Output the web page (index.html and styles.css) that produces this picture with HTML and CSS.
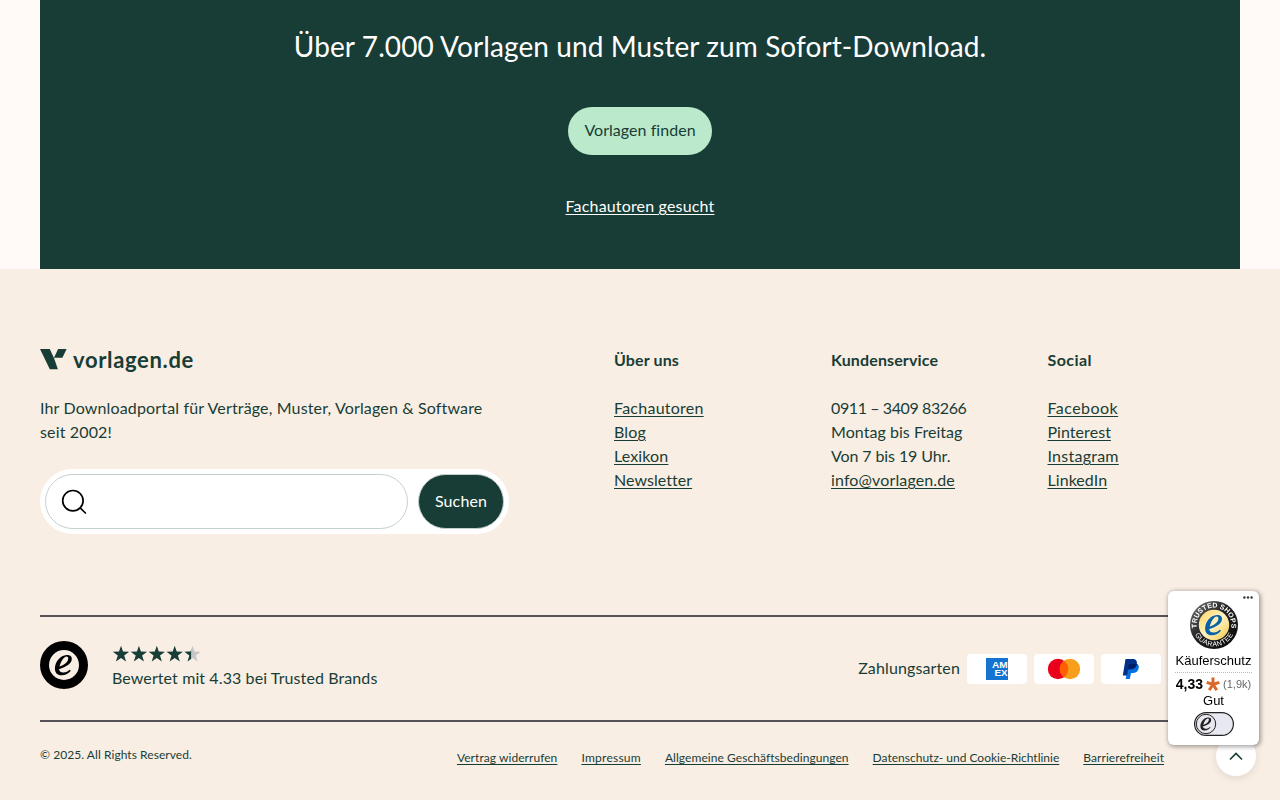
FILE: index.html
```
<!DOCTYPE html>
<html lang="de">
<head>
    <meta charset="UTF-8">
    <title>vorlagen.de</title>
    <link rel="stylesheet" href="styles.css">
</head>
<body>
    <section class="cta">
        <h2><span>Über 7.000 Vorlagen und Muster zum Sofort-Download.</span></h2>
        <a class="cta-btn" href="#">Vorlagen finden</a>
        <a class="cta-link" href="#">Fachautoren gesucht</a>
    </section>

    <footer class="footer">
        <div class="footer-top">
            <div class="about">
                <a class="logo" href="#">
                    <svg width="27" height="21" viewBox="0 0 27 21" fill="#183d36">
                        <path d="M0 0h9.8l4.3 9.3 3.8 10.9H9.8Z"/>
                        <path d="M18.1 0h8.5l-4.2 8.8H14Z"/>
                    </svg>
                    <span>vorlagen.de</span>
                </a>
                <p class="claim">Ihr Downloadportal für Verträge, Muster, Vorlagen &amp; Software<br>seit 2002!</p>
                <form class="search">
                    <div class="search-field">
                        <svg width="26" height="26" viewBox="0 0 26 26" fill="none" stroke="#000" stroke-width="1.7" stroke-linecap="round">
                            <circle cx="11.9" cy="11.7" r="10.2"/>
                            <path d="M19.4 19.2l5 4.8"/>
                        </svg>
                    </div>
                    <button class="search-btn" type="button">Suchen</button>
                </form>
            </div>
            <div class="col">
                <h3>Über uns</h3>
                <a class="wide" href="#">Fachautoren</a>
                <a href="#">Blog</a>
                <a href="#">Lexikon</a>
                <a class="tight" href="#">Newsletter</a>
            </div>
            <div class="col">
                <h3>Kundenservice</h3>
                <span class="phone">0911 – 3409 83266</span>
                <span class="tight">Montag bis Freitag</span>
                <span class="hours">Von 7 bis 19 Uhr.</span>
                <a href="#">info@vorlagen.de</a>
            </div>
            <div class="col">
                <h3 class="wider">Social</h3>
                <a class="wider" href="#">Facebook</a>
                <a class="tight" href="#">Pinterest</a>
                <a class="wide" href="#">Instagram</a>
                <a class="tight" href="#">LinkedIn</a>
            </div>
        </div>

        <div class="trust">
            <svg class="trust-logo" width="48" height="48" viewBox="0 0 48 48">
                <circle cx="24" cy="24" r="24"/>
                <circle cx="24" cy="24" r="15" fill="#f9eee4"/>
                <path transform="translate(14 13.5)" d="M3.7 14.8C8 13.7 17.7 10.6 17.8 4.4 17.9 1.4 15.6.4 12.7.5 6.1.8.9 7.8.9 14c0 4.1 2.4 6.8 6.5 6.8 4.1 0 7.5-2.3 9.4-4.6l-1-.9c-1.8 1.6-3.9 2.8-6.3 2.8-3.2 0-4.5-1.7-4.5-4.4ZM5.6 12C6.7 7.4 9.7 2.1 12.5 2.1c1.4 0 1.9.9 1.7 2.4C13.8 7.9 9.7 10.8 5.6 12Z"/>
            </svg>
            <div class="rating">
                <svg class="stars" width="90" height="18" viewBox="0 0 90 18" fill="#183d36">
                    <defs>
                        <path id="star" d="M9 .8l2 5.8 6.2.1-5 3.8 1.9 6-5.1-3.6-5.1 3.6 1.9-6-5-3.8 6.2-.1Z"/>
                        <clipPath id="part"><rect x="0" y="0" width="7.5" height="18"/></clipPath>
                    </defs>
                    <use href="#star"/>
                    <use href="#star" x="17.9"/>
                    <use href="#star" x="35.8"/>
                    <use href="#star" x="53.7"/>
                    <use href="#star" x="71.6" fill="#c5c8c6"/>
                    <g transform="translate(71.6 0)"><use href="#star" clip-path="url(#part)"/></g>
                </svg>
                <span>Bewertet mit 4.33 bei Trusted Brands</span>
            </div>
            <div class="payment">
                <span>Zahlungsarten</span>
                <div class="card">
                    <svg width="22" height="22" viewBox="0 0 22 22">
                        <path fill="#1474cf" d="M0 0h22v22H0Z"/>
                        <text class="amex" x="6" y="10.3" textLength="15.7" lengthAdjust="spacingAndGlyphs">AM</text>
                        <text class="amex" x="8.5" y="18.2" textLength="13.2" lengthAdjust="spacingAndGlyphs">EX</text>
                    </svg>
                </div>
                <div class="card">
                    <svg width="34" height="22" viewBox="0 0 34 22">
                        <circle cx="11" cy="11" r="10.2" fill="#eb001b"/>
                        <circle cx="23" cy="11" r="10.2" fill="#f79e1b"/>
                        <path fill="#ff5f00" d="M17 2.7a10.2 10.2 0 0 1 0 16.6 10.2 10.2 0 0 1 0-16.6Z"/>
                    </svg>
                </div>
                <div class="card">
                    <svg width="18" height="22" viewBox="0 0 18 22">
                        <path fill="#0070e0" d="M7 6h8.4c1.5 1.1 1.7 2.7 1.2 4.5-.7 3.1-2.9 4.6-6 4.6H9L7.8 21H3.6Z"/>
                        <path fill="#003087" d="M3.5 1h6.8c3.6 0 5.2 2 4.5 5.2-.7 3.3-3.1 5-6.3 5H6.3L5 17.4H.8Z"/>
                        <path fill="#001c64" d="M7 6h7.8v.2c-.7 3.3-3.1 5-6.3 5H6.1Z"/>
                    </svg>
                </div>
                <div class="card"></div>
            </div>
        </div>

        <div class="legal">
            <span>© 2025. All Rights Reserved.</span>
            <nav>
                <a href="#">Vertrag widerrufen</a>
                <a class="wide" href="#">Impressum</a>
                <a href="#">Allgemeine Geschäftsbedingungen</a>
                <a class="privacy" href="#">Datenschutz- und Cookie-Richtlinie</a>
                <a href="#">Barrierefreiheit</a>
            </nav>
        </div>
    </footer>

    <a class="to-top" href="#">
        <svg width="14" height="9" viewBox="0 0 14 9" fill="none" stroke="#183d36" stroke-width="1.6"><path d="M1 7.5l6-6 6 6"/></svg>
    </a>

    <aside class="badge">
        <svg class="dots" width="10" height="3" viewBox="0 0 10 3" fill="#333"><circle cx="1.4" cy="1.5" r="1.2"/><circle cx="5" cy="1.5" r="1.2"/><circle cx="8.6" cy="1.5" r="1.2"/></svg>
        <svg class="seal" width="48" height="48" viewBox="0 0 48 48">
            <defs>
                <linearGradient id="gold" x1="0" y1="0" x2="1" y2="1">
                    <stop offset="0" stop-color="#ffd45a"/>
                    <stop offset=".5" stop-color="#fff3c4"/>
                    <stop offset="1" stop-color="#f4c543"/>
                </linearGradient>
                <linearGradient id="ring" x1="0" y1="0" x2="1" y2="1">
                    <stop offset="0" stop-color="#777"/>
                    <stop offset=".45" stop-color="#222"/>
                    <stop offset="1" stop-color="#080808"/>
                </linearGradient>
                <path id="arc-top" d="M7.2 28A17.3 17.3 0 1 1 40.8 28"/>
                <path id="arc-bottom" d="M2.9 27A21.3 21.3 0 0 0 45.1 27"/>
            </defs>
            <circle cx="24" cy="24" r="24" fill="url(#ring)"/>
            <circle cx="24" cy="24" r="15.2" fill="url(#gold)"/>
            <text class="seal-text"><textPath href="#arc-top" startOffset="50%" text-anchor="middle" textLength="60">TRUSTED SHOPS</textPath></text>
            <text class="seal-text thin"><textPath href="#arc-bottom" startOffset="50%" text-anchor="middle" textLength="47">GUARANTEE</textPath></text>
            <path transform="translate(14.2 13.5)" fill="#0c62a5" d="M3.7 14.8C8 13.7 17.7 10.6 17.8 4.4 17.9 1.4 15.6.4 12.7.5 6.1.8.9 7.8.9 14c0 4.1 2.4 6.8 6.5 6.8 4.1 0 7.5-2.3 9.4-4.6l-1-.9c-1.8 1.6-3.9 2.8-6.3 2.8-3.2 0-4.5-1.7-4.5-4.4ZM5.6 12C6.7 7.4 9.7 2.1 12.5 2.1c1.4 0 1.9.9 1.7 2.4C13.8 7.9 9.7 10.8 5.6 12Z"/>
        </svg>
        <div class="badge-title">Käuferschutz</div>
        <div class="score">
            <b>4,33</b>
            <svg width="14" height="14" viewBox="0 0 14 14" stroke="#d9692b" stroke-width="3"><path d="M7 7.5V.5M7 7.5L.7 5.4M7 7.5l6.3-2.1M7 7.5l-3.8 5.6M7 7.5l3.8 5.6"/></svg>
            <small>(1,9k)</small>
        </div>
        <div class="grade">Gut</div>
        <svg class="toggle" width="40" height="24" viewBox="0 0 40 24" fill="#e8e8f0" stroke="#222">
            <rect x=".6" y=".6" width="38.8" height="22.8" rx="11.4" stroke-width="1.2"/>
            <circle cx="12" cy="12" r="9.7"/>
            <path transform="translate(5.8 5.2) scale(.64)" fill="#222" stroke="none" d="M3.7 14.8C8 13.7 17.7 10.6 17.8 4.4 17.9 1.4 15.6.4 12.7.5 6.1.8.9 7.8.9 14c0 4.1 2.4 6.8 6.5 6.8 4.1 0 7.5-2.3 9.4-4.6l-1-.9c-1.8 1.6-3.9 2.8-6.3 2.8-3.2 0-4.5-1.7-4.5-4.4ZM5.6 12C6.7 7.4 9.7 2.1 12.5 2.1c1.4 0 1.9.9 1.7 2.4C13.8 7.9 9.7 10.8 5.6 12Z"/>
        </svg>
    </aside>
</body>
</html>
```
FILE: styles.css
```
* { box-sizing: border-box; }
body { margin: 0; height: 800px; overflow: hidden; background: #fffaf7; color: #183d36; font-family: Lato, "Liberation Sans", sans-serif; font-size: 16px; line-height: 24px; letter-spacing: 0.13px; }
h2, h3, p { margin: 0; }
a { color: inherit; text-underline-offset: 2px; }
svg { display: block; flex: none; }
.tight { letter-spacing: 0.05px; }
.wide { letter-spacing: 0.25px; }
.wider { letter-spacing: 0.45px; }

.cta { height: 269px; margin: 0 40px; padding-top: 26px; background: #183d36; color: #fff; display: flex; flex-direction: column; align-items: center; }
.cta h2 { font-size: 28px; font-weight: 400; line-height: 40px; letter-spacing: 0.09px; }
.cta-btn { width: 144px; height: 48px; margin-top: 41px; border-radius: 24px; background: #baeacb; color: #183d36; line-height: 46px; letter-spacing: 0.04px; text-align: center; text-decoration: none; }
.cta-link { margin-top: 39px; letter-spacing: 0.17px; }

.footer { height: 531px; padding: 79px 40px 0; background: #f9eee4; }
.footer-top { display: grid; grid-template-columns: 574px 217px 216.5px 1fr; height: 267px; }
.logo { display: flex; gap: 6px; height: 24px; margin-bottom: 24px; text-decoration: none; font-size: 22px; font-weight: 700; letter-spacing: 0.66px; }
.logo svg { margin-top: 1px; }
.claim { letter-spacing: 0.15px; }
.search { display: flex; justify-content: space-between; width: 469px; height: 65px; margin-top: 25px; padding: 5px; border-radius: 33px; background: #fff; }
.search-field { width: 363px; height: 55px; padding: 14px 15px; border: 1px solid #c5d0d0; border-radius: 28px; }
.search-btn { width: 86px; height: 55px; padding: 0 0 2px; border: 1px solid #c5d0d0; border-radius: 28px; background: #183d36; color: #fff; font: inherit; letter-spacing: inherit; }
.col { display: flex; flex-direction: column; align-items: flex-start; }
.col h3 { margin-bottom: 24px; font-size: 16px; font-weight: 700; }
.phone { letter-spacing: -0.4px; }
.hours { letter-spacing: -0.1px; }

.trust { display: flex; height: 107px; padding-top: 24px; border-top: 2px solid #575257; border-bottom: 2px solid #575257; }
.trust-logo { margin-right: 24px; }
.rating { display: flex; flex-direction: column; padding-top: 4px; letter-spacing: 0.1px; }
.stars { margin-bottom: 3px; }
.payment { display: flex; align-items: center; gap: 7px; height: 30px; margin: 13px 12px 0 auto; }
.payment span { margin-top: -2px; }
.card { width: 60px; height: 30px; border-radius: 4px; background: #fff; display: flex; align-items: center; justify-content: center; }
.amex { fill: #fff; font: bold 9px "Liberation Sans", sans-serif; letter-spacing: 0; }

.legal { display: flex; justify-content: space-between; padding: 24px 76px 0 0; font-size: 12px; line-height: 18px; letter-spacing: 0.06px; }
.legal nav { display: flex; gap: 24px; padding-top: 3px; }
.privacy { letter-spacing: 0; }

.to-top { position: fixed; right: 24px; top: 736px; width: 40px; height: 40px; border-radius: 50%; background: #fff; box-shadow: 0 2px 8px rgba(0,0,0,.1); display: flex; align-items: center; justify-content: center; }
.badge { position: fixed; left: 1168px; top: 591px; width: 91px; height: 154px; padding-top: 10px; border-radius: 6px; background: #fff; box-shadow: 1px 1px 4px 1px rgba(0,0,0,.35); color: #000; font-family: "Liberation Sans", Arial, sans-serif; font-size: 13px; line-height: 16px; letter-spacing: 0; display: flex; flex-direction: column; align-items: center; }
.dots { position: absolute; right: 6px; top: 5px; }
.badge-title { width: 77px; height: 21px; margin-top: 3px; border-bottom: 1px dotted #bbb; line-height: 18px; text-align: center; white-space: nowrap; }
.score { display: flex; align-items: center; gap: 3px; height: 18px; margin-top: 2px; }
.score b { font-size: 14px; }
.score small { font-size: 11px; color: #666; }
.toggle { margin-top: 3px; }
.seal-text { fill: #fff; font: bold 7px "Liberation Sans", sans-serif; letter-spacing: 0; }
.thin { font-weight: 400; }
```
